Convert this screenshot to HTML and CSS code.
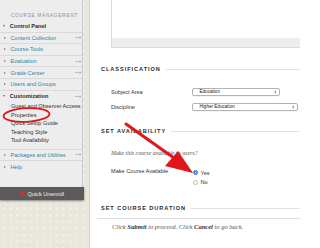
FILE: index.html
```html
<!DOCTYPE html>
<html lang="en">
<head>
<meta charset="utf-8">
<title>Course Properties</title>
<link rel="stylesheet" href="styles.css">
</head>
<body>
<div class="page">
  <aside class="side">
    <nav class="panel">
      <div class="mgmt">COURSE MANAGEMENT</div>
      <div class="row"><span class="tri down"></span><b class="strong">Control Panel</b></div>
      <div class="row"><span class="tri"></span><span class="link">Content Collection</span><svg class="go" viewBox="0 0 7 3"><path d="M0 1.5H6.3M4.8 0.4L6.6 1.5L4.8 2.6" fill="none" stroke="#8a8a8a" stroke-width="0.5"/></svg></div>
      <div class="row"><span class="tri"></span><span class="link">Course Tools</span></div>
      <div class="row"><span class="tri"></span><span class="link">Evaluation</span><svg class="go" viewBox="0 0 7 3"><path d="M0 1.5H6.3M4.8 0.4L6.6 1.5L4.8 2.6" fill="none" stroke="#8a8a8a" stroke-width="0.5"/></svg></div>
      <div class="row"><span class="tri"></span><span class="link">Grade Center</span><svg class="go" viewBox="0 0 7 3"><path d="M0 1.5H6.3M4.8 0.4L6.6 1.5L4.8 2.6" fill="none" stroke="#8a8a8a" stroke-width="0.5"/></svg></div>
      <div class="row"><span class="tri"></span><span class="link">Users and Groups</span></div>
      <div class="group">
        <div class="row plain"><span class="tri down"></span><b class="strong">Customization</b><svg class="go" viewBox="0 0 7 3"><path d="M0 1.5H6.3M4.8 0.4L6.6 1.5L4.8 2.6" fill="none" stroke="#8a8a8a" stroke-width="0.5"/></svg></div>
        <ul class="subs">
          <li>Guest and Observer Access</li>
          <li>Properties</li>
          <li>Quick Setup Guide</li>
          <li>Teaching Style</li>
          <li>Tool Availability</li>
        </ul>
      </div>
      <div class="row"><span class="tri"></span><span class="link">Packages and Utilities</span><svg class="go" viewBox="0 0 7 3"><path d="M0 1.5H6.3M4.8 0.4L6.6 1.5L4.8 2.6" fill="none" stroke="#8a8a8a" stroke-width="0.5"/></svg></div>
      <div class="row plain"><span class="tri"></span><span class="link">Help</span></div>
    </nav>
    <div class="unenroll">
      <svg class="xicon" viewBox="0 0 6 6"><path d="M1 1L5 5M5 1L1 5" stroke="#e8262a" stroke-width="1.6" stroke-linecap="round"/></svg>
      <span>Quick Unenroll</span>
    </div>
  </aside>

  <main class="main">
    <div class="topbox"><div class="topbox-foot"></div></div>

    <h2 class="sec-head first">CLASSIFICATION</h2>
    <div class="field f-subject">
      <span class="label">Subject Area</span>
      <span class="select w-short">Education<svg class="updown" viewBox="0 0 3 5"><path d="M0.3 2L1.5 0.5L2.7 2ZM0.3 3L1.5 4.5L2.7 3Z" fill="#444"/></svg></span>
    </div>
    <div class="field f-disc">
      <span class="label">Discipline</span>
      <span class="select w-long">Higher Education<svg class="updown" viewBox="0 0 3 5"><path d="M0.3 2L1.5 0.5L2.7 2ZM0.3 3L1.5 4.5L2.7 3Z" fill="#444"/></svg></span>
    </div>

    <h2 class="sec-head avail">SET AVAILABILITY</h2>
    <p class="instr">Make this course available to users?</p>
    <div class="field f-radio">
      <span class="label">Make Course Available</span>
      <div class="radios">
        <label class="opt"><span class="radio on"></span>Yes</label>
        <label class="opt"><span class="radio"></span>No</label>
      </div>
    </div>

    <h2 class="sec-head dur">SET COURSE DURATION</h2>
    <div class="submit-bar">
      <p class="submit-text">Click <b>Submit</b> to proceed. Click <b>Cancel</b> to go back.</p>
    </div>
  </main>

  <svg class="annot" viewBox="0 0 300 248" width="300" height="248">
    <ellipse cx="26.5" cy="115" rx="23" ry="6.8" fill="none" stroke="#e0161c" stroke-width="1.8" transform="rotate(-3 26.5 115)"/>
    <path d="M126 124L174 158" stroke="#e0161c" stroke-width="3" stroke-linecap="round"/>
    <path d="M193 173L178 151L165 166Z" fill="#e0161c"/>
  </svg>
</div>
</body>
</html>
```

FILE: styles.css
```css
* { box-sizing: border-box; }

html, body {
  margin: 0;
  padding: 0;
}

body {
  width: 300px;
  height: 248px;
  overflow: hidden;
  font-family: "Liberation Sans", Arial, sans-serif;
}

.page {
  position: relative;
  display: flex;
  width: 300px;
  height: 248px;
  overflow: hidden;
  background-color: #e9e6db;
  background-image: radial-gradient(circle, #f5f3ec 0.9px, transparent 1.2px);
  background-size: 6.6px 6.6px;
  background-position: 1px 1px;
}

/* ---------- sidebar ---------- */
.side {
  width: 89px;
  flex: none;
  padding-right: 6px;
}

.panel {
  background: #ededed;
  border-right: 1px solid #c9c9c9;
  padding-bottom: 14.6px;
}

.mgmt {
  height: 21px;
  padding: 12.5px 0 0 11px;
  font-size: 4.5px;
  line-height: 5px;
  letter-spacing: 0.85px;
  color: #8a8a8a;
}

.row {
  display: flex;
  align-items: center;
  height: 11.6px;
  padding-left: 3px;
  padding-right: 1px;
  border-bottom: 1px solid #d9d9d9;
  font-size: 5.6px;
}

.row.plain { border-bottom: none; }

.tri {
  width: 0;
  height: 0;
  margin-right: 5px;
  border-top: 1.5px solid transparent;
  border-bottom: 1.5px solid transparent;
  border-left: 2.4px solid #7a7a7a;
  margin-left: 0.5px;
}

.tri.down {
  border-left: 1.6px solid transparent;
  border-right: 1.6px solid transparent;
  border-top: 2.4px solid #6a6a6a;
  border-bottom: none;
  margin-left: 0;
  margin-right: 4.8px;
}

.strong {
  font-weight: bold;
  color: #2b2b2b;
}

.link {
  color: #2f84a6;
}

.go {
  width: 6.5px;
  height: 3px;
  margin-left: auto;
}

.group {
  border-bottom: 1px solid #d9d9d9;
}

.subs {
  list-style: none;
  margin: 0;
  padding: 0 0 4px 11px;
}

.subs li {
  height: 8.5px;
  line-height: 8.5px;
  font-size: 5.6px;
  color: #2e2e2e;
  white-space: nowrap;
}

.unenroll {
  height: 13px;
  background: #5b5b5b;
  box-shadow: 0 1px 2px rgba(0, 0, 0, 0.45);
  display: flex;
  align-items: center;
  justify-content: center;
  gap: 2.5px;
  margin-right: -1px;
  font-size: 5.6px;
  color: #f2f2f2;
}

.xicon {
  width: 5px;
  height: 5px;
}

/* ---------- main ---------- */
.main {
  flex: 1;
  min-width: 0;
  background: #fff;
  border-left: 1px solid #d4d1c6;
  display: flex;
  flex-direction: column;
  overflow: hidden;
  color: #333;
}

.topbox {
  margin: -1px 0 0 21px;
  height: 49px;
  width: 200px;
  flex: none;
  border: 1px solid #dcdcdc;
  border-right: none;
  display: flex;
  flex-direction: column;
}

.topbox-foot {
  margin-top: auto;
  height: 9px;
  background: #ededed;
}

.sec-head {
  display: flex;
  align-items: center;
  height: 8px;
  margin: 0 0 0 11px;
  font-size: 5.6px;
  font-weight: bold;
  letter-spacing: 0.95px;
  color: #2a2a2a;
  white-space: nowrap;
}

.sec-head::after {
  content: "";
  flex: 1;
  height: 1px;
  margin-left: 5px;
  background: #e2e2e2;
}

.sec-head.first { margin-top: 17px; }
.sec-head.avail { margin-top: 16.5px; }
.sec-head.dur { margin-top: 17.5px; }

.field {
  display: flex;
  margin-left: 21px;
  font-size: 5.6px;
}

.f-subject { margin-top: 14.5px; height: 8px; align-items: center; }
.f-disc { margin-top: 7px; height: 8px; align-items: center; }
.f-radio { margin-top: 10px; align-items: flex-start; }

.label {
  width: 81px;
  flex: none;
  line-height: 8px;
}

.select {
  display: flex;
  align-items: center;
  justify-content: space-between;
  height: 8px;
  padding: 0 2.5px 0 6.5px;
  border: 0.8px solid #b3b3b3;
  border-radius: 2px;
  background: #fff;
  font-size: 4.6px;
  color: #222;
  box-shadow: 0 0.5px 0.5px rgba(0, 0, 0, 0.08);
}

.w-short { width: 88px; }
.w-long { width: 106px; }

.updown {
  width: 2.5px;
  height: 4px;
}

.instr {
  margin: 14px 0 0 21px;
  height: 8px;
  line-height: 8px;
  font-family: "Liberation Serif", "Times New Roman", serif;
  font-style: italic;
  font-size: 5.9px;
  color: #555;
}

.radios {
  display: flex;
  flex-direction: column;
  margin-top: 0.75px;
}

.opt {
  display: flex;
  align-items: center;
  height: 9.5px;
  gap: 3px;
  padding-left: 0.5px;
  font-size: 5.6px;
  color: #333;
}

.radio {
  width: 5px;
  height: 5px;
  border-radius: 50%;
  border: 0.7px solid #bdbdbd;
  background: #fff;
}

.radio.on {
  border-color: #2a7fe0;
  background: radial-gradient(circle, #fff 0 0.8px, #3a8ff0 1px);
}

.submit-bar {
  margin: 6px 0 0 7px;
  border-top: 1px solid #dedede;
  padding: 4px 0 0 15px;
}

.submit-text {
  margin: 0;
  height: 8px;
  line-height: 8px;
  font-family: "Liberation Serif", "Times New Roman", serif;
  font-style: italic;
  font-size: 6.5px;
  color: #555;
  white-space: nowrap;
}

.submit-text b { color: #333; }

/* ---------- annotations ---------- */
.annot {
  position: absolute;
  left: 0;
  top: 0;
  pointer-events: none;
}
```
